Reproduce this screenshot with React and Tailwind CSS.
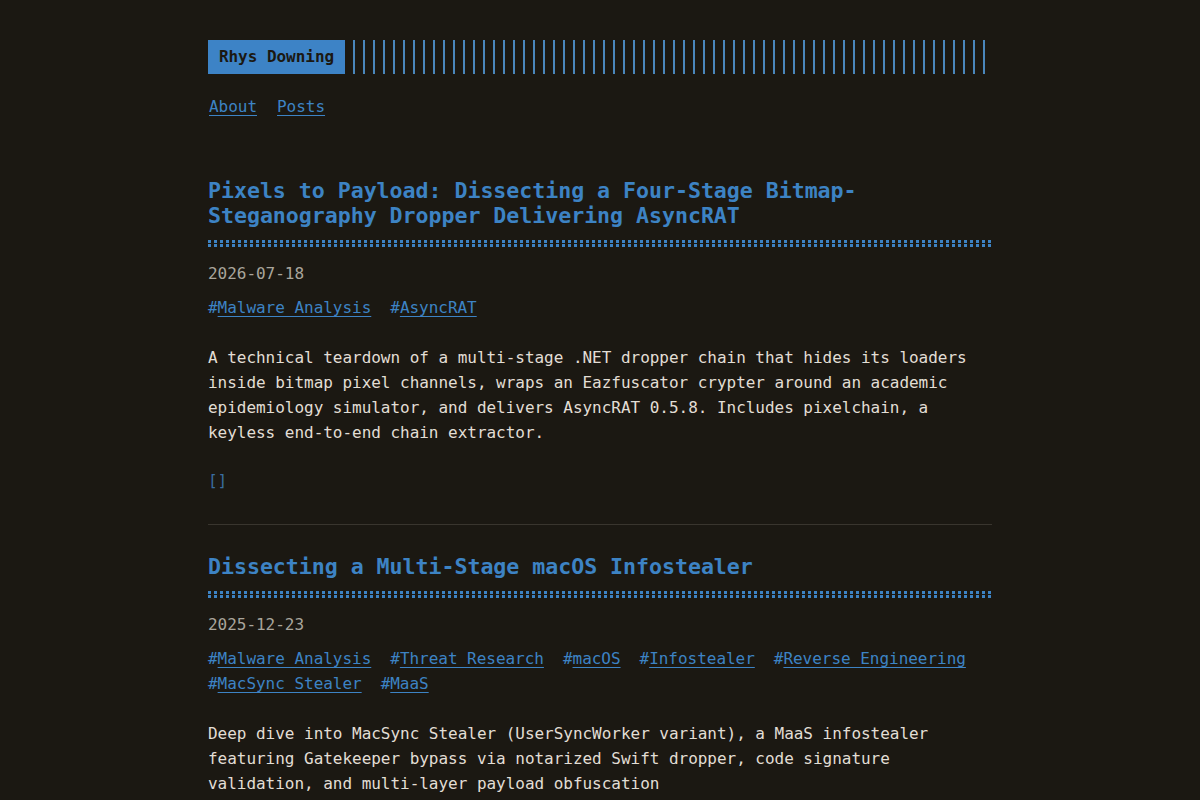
export default function App() {
  const font = { fontFamily: '"DejaVu Sans Mono", "Liberation Mono", monospace' };
  const Dots = () => (
    <div className="mt-3 flex flex-col gap-[1px]">
      <div className="h-[3px] w-full bg-[repeating-linear-gradient(90deg,#3d83c4_0_3px,transparent_3px_6px)]" />
      <div className="h-[3px] w-full bg-[repeating-linear-gradient(90deg,#3d83c4_0_3px,transparent_3px_6px)]" />
    </div>
  );
  const Tags = ({ tags }) => (
    <div className="mt-[9px] flex flex-wrap gap-x-[19px] text-[16px] leading-[25px]">
      {tags.map((t) => (
        <span key={t} className="text-[#3d83c4]">
          #<a href="#" className="underline underline-offset-[3px] decoration-1">{t}</a>
        </span>
      ))}
    </div>
  );
  return (
    <div className="min-h-[800px] bg-[#1b1812] tracking-[-0.03px] text-[#e2ded5]" style={font}>
      <div className="mx-auto w-[864px] px-10 pt-10">
        <header>
          <div className="flex h-[34px] items-stretch">
            <div className="flex w-[137px] items-center justify-center bg-[#3d83c6] text-[16px] font-bold text-[#1b1812]">
              Rhys Downing
            </div>
            <div className="ml-2 flex-1 bg-[repeating-linear-gradient(90deg,#4a86bb_0_2px,transparent_2px_10px)]" />
          </div>
          <nav className="mt-[21px] flex gap-5 pl-px text-[16px] leading-6 text-[#3d83c4]">
            <a href="#" className="underline underline-offset-[3px] decoration-1">About</a>
            <a href="#" className="underline underline-offset-[3px] decoration-1">Posts</a>
          </nav>
        </header>

        <article className="mt-[59px]">
          <h2 className="text-[21.6px] font-bold leading-[25px] text-[#3d83c4]">
            Pixels to Payload: Dissecting a Four-Stage Bitmap-Steganography Dropper Delivering AsyncRAT
          </h2>
          <Dots />
          <div className="mt-[15px] text-[16px] leading-6 text-[#a9a59c]">2026-07-18</div>
          <Tags tags={["Malware Analysis", "AsyncRAT"]} />
          <p className="mt-[25px] text-[16px] leading-[25px]">
            A technical teardown of a multi-stage .NET dropper chain that hides its loaders inside bitmap pixel channels, wraps an Eazfuscator crypter around an academic epidemiology simulator, and delivers AsyncRAT 0.5.8. Includes pixelchain, a keyless end-to-end chain extractor.
          </p>
          <div className="mt-6 text-[16px] leading-6 text-[#3a6d9e]">[]</div>
        </article>

        <div className="mt-[31px] h-px bg-[#39352e]" />

        <article className="mt-[29px]">
          <h2 className="text-[21.6px] font-bold leading-[25px] text-[#3d83c4]">
            Dissecting a Multi-Stage macOS Infostealer
          </h2>
          <Dots />
          <div className="mt-[15px] text-[16px] leading-6 text-[#a9a59c]">2025-12-23</div>
          <Tags
            tags={[
              "Malware Analysis",
              "Threat Research",
              "macOS",
              "Infostealer",
              "Reverse Engineering",
              "MacSync Stealer",
              "MaaS",
            ]}
          />
          <p className="mt-[25px] text-[16px] leading-[25px]">
            Deep dive into MacSync Stealer (UserSyncWorker variant), a MaaS infostealer featuring Gatekeeper bypass via notarized Swift dropper, code signature validation, and multi-layer payload obfuscation
          </p>
        </article>
      </div>
    </div>
  );
}
